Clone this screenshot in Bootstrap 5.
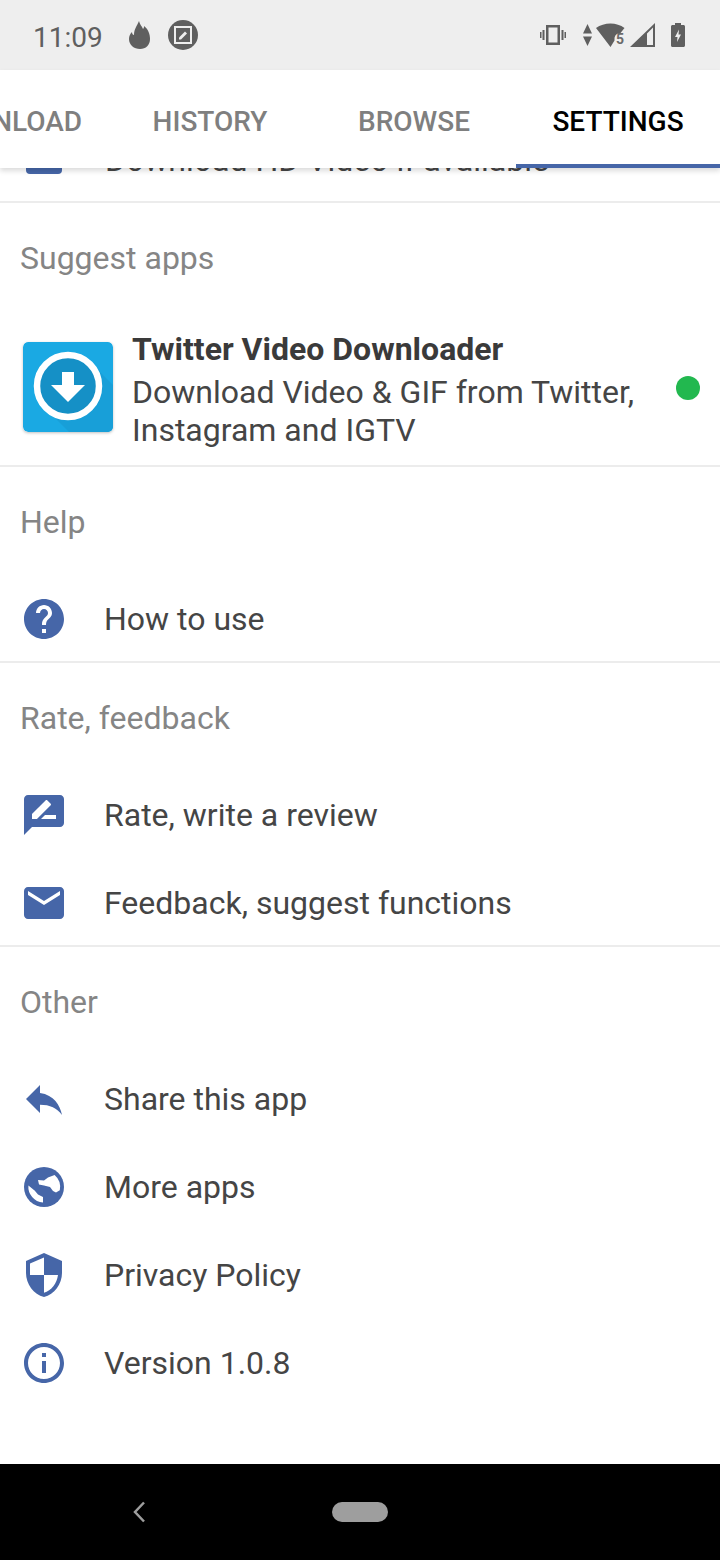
<!DOCTYPE html>
<html lang="en">

<head>
    <meta charset="UTF-8" />
    <meta name="viewport" content="width=device-width, initial-scale=1" />
    <title>Settings</title>
    <link href="https://cdn.jsdelivr.net/npm/bootstrap@5.3.2/dist/css/bootstrap.min.css" rel="stylesheet" />
    <style>
        body {
            background-color: white;
            font-family: Roboto, sans-serif;
            margin: 0;
            height: 1560px;
            overflow: hidden;
        }

        .status-bar {
            background-color: #eeeeee;
            height: 70px;
            padding: 0 33px;
            color: #5f5f5f;
            font-size: 28px;
        }

        .status-bar svg {
            fill: #5f5f5f;
            display: block;
        }

        .status-time {
            padding-top: 5px;
        }

        .status-flame {
            margin-left: 25px;
        }

        .status-icons {
            width: 148px;
            height: 30px;
        }

        .tab-bar {
            height: 98px;
            background-color: white;
            box-shadow: 0 3px 5px rgba(0, 0, 0, 0.14);
            position: relative;
            z-index: 2;
            overflow: hidden;
        }

        .tab-item {
            flex: 0 0 204px;
            height: 98px;
            padding-top: 6px;
            font-size: 28px;
            font-weight: 500;
            color: #7f7f7f;
            text-align: center;
        }

        .tab-item.active-tab {
            color: black;
            box-shadow: inset 0 -4px 0 #4666a8;
        }

        .content-area {
            height: 1296px;
            overflow: hidden;
            color: #454545;
        }

        .clipped-row {
            height: 63px;
            margin-top: -30px;
            padding: 0 0 19px 26px;
            gap: 43px;
            font-size: 32px;
        }

        .clipped-icon {
            width: 36px;
            height: 28px;
            background-color: #4666a8;
            border-radius: 4px;
        }

        .group-box {
            border-bottom: 2px solid #ececec;
        }

        .group-box:last-child {
            border-bottom: 0;
        }

        .group-title {
            height: 108px;
            padding: 35px 0 0 20px;
            font-size: 32px;
            line-height: 40px;
            color: #858585;
        }

        .option-row {
            height: 88px;
            gap: 36px;
            padding-left: 20px;
            font-size: 32px;
        }

        .option-row:last-child {
            margin-bottom: -2px;
        }

        .option-row svg {
            fill: #4666a8;
        }

        .app-row {
            height: 154px;
            padding: 31px 0 0 23px;
            position: relative;
        }

        .app-logo {
            border-radius: 5px;
            box-shadow: 0 1px 3px rgba(0, 0, 0, 0.25);
        }

        .app-text {
            padding-left: 19px;
            margin-top: -16px;
            font-size: 32px;
            line-height: 38px;
        }

        .app-text strong {
            display: block;
            font-weight: 700;
            line-height: 47px;
            color: #3a3a3a;
        }

        .green-dot {
            width: 24px;
            height: 24px;
            border-radius: 50%;
            background-color: #22b84f;
            position: absolute;
            right: 20px;
            top: 65px;
        }

        .bottom-nav {
            height: 96px;
            background-color: black;
            position: relative;
        }

        .back-arrow {
            position: absolute;
            left: 132px;
            top: 37px;
        }

        .home-pill {
            width: 56px;
            height: 20px;
            border-radius: 10px;
            background-color: #9e9e9e;
        }
    </style>
</head>

<body>

    <div class="status-bar d-flex align-items-center">
        <span class="status-time">11:09</span>
        <svg class="status-flame" width="24" height="30" viewBox="0 0 24 30"><path d="M11 1c1 4 3 5 4 8 1-1 1-2 1-3 4 3 6 8 6 13 0 6-4 10-10 10S1 25 1 19c0-3 1-5 3-7 0 2 1 3 2 3 0-6 3-9 5-14z" /></svg>
        <svg class="ms-3" width="30" height="30" viewBox="0 0 30 30"><circle cx="15" cy="15" r="15" /><path d="M7 7h16v16H7z" fill="none" stroke="#eee" stroke-width="2" /><path d="M11 17.500l6-6 2 2-6 6h-2z" fill="#eee" /></svg>
        <div class="status-icons ms-auto d-flex align-items-center">
            <svg width="28" height="20" viewBox="0 0 28 20"><path d="M7 0h14v20H7zM9.500 2.500v15h9v-15zM3.500 5h2v10h-2zM22.500 5h2v10h-2zM1 7h1.500v6H1zM25.500 7H27v6h-1.500z" fill-rule="evenodd" /></svg>
            <svg class="ms-3" width="9" height="22" viewBox="0 0 9 22"><path d="M4.500 0L9 9.500H0zM0 12.500h9L4.500 22z" /></svg>
            <svg class="ms-1" width="30" height="24" viewBox="0 0 30 24"><path d="M0 5C8-1 21-1 28.500 5l-4 5c-3 0-6 2-6 6v1.500L14.500 24z" /><text x="20" y="21" font-size="14" font-family="Roboto" font-weight="700" fill="#6a6a6a">5</text></svg>
            <svg class="ms-1" width="25" height="24" viewBox="0 0 25 24"><path d="M0 24L25 0v24zM17 22h6V4.500l-6 6z" fill-rule="evenodd" /></svg>
            <svg class="ms-3" width="14" height="24" viewBox="0 0 14 24"><path d="M4 0h6v2h2.500c.8 0 1.500.7 1.500 1.500v19c0 .8-.7 1.500-1.500 1.500h-11C.7 24 0 23.300 0 22.500v-19C0 2.700.7 2 1.500 2H4z" /><path d="M8 6.500l-4 7.500h2.500L6 19l4-7.500H7.500z" fill="#eee" /></svg>
        </div>
    </div>

    <div class="tab-bar d-flex justify-content-end align-items-center">
        <div class="tab-item d-flex align-items-center justify-content-center">DOWNLOAD</div>
        <div class="tab-item d-flex align-items-center justify-content-center">HISTORY</div>
        <div class="tab-item d-flex align-items-center justify-content-center">BROWSE</div>
        <div class="tab-item active-tab d-flex align-items-center justify-content-center">SETTINGS</div>
    </div>

    <div class="content-area">
        <div class="group-box">
            <div class="clipped-row d-flex align-items-center">
                <div class="clipped-icon"></div>
                <span>Download HD Video if available</span>
            </div>
        </div>

        <div class="group-box">
            <div class="group-title">Suggest apps</div>
            <div class="app-row d-flex">
                <svg class="app-logo flex-shrink-0" width="90" height="90" viewBox="0 0 90 90">
                    <rect width="90" height="90" rx="5" fill="#1aa9e3" />
                    <path d="M68 21L90 43V85c0 3-2 5-5 5H46L22 66z" fill="#189fd8" />
                    <circle cx="45" cy="44" r="31" fill="#1590c6" stroke="white" stroke-width="6.500" />
                    <path d="M39 30h12v13h11L45 60 28 43h11z" fill="white" />
                </svg>
                <div class="app-text">
                    <strong>Twitter Video Downloader</strong>
                    Download Video &amp; GIF from Twitter,<br />Instagram and IGTV
                </div>
                <div class="green-dot"></div>
            </div>
        </div>

        <div class="group-box">
            <div class="group-title">Help</div>
            <div class="option-row d-flex align-items-center">
                <svg width="48" height="48" viewBox="0 0 24 24"><path d="M12 2C6.480 2 2 6.480 2 12s4.480 10 10 10 10-4.480 10-10S17.520 2 12 2zm1 17h-2v-2h2v2zm2.070-7.750l-.9.920C13.450 12.900 13 13.500 13 15h-2v-.5c0-1.100.45-2.100 1.170-2.830l1.240-1.260c.37-.36.59-.86.59-1.410 0-1.100-.9-2-2-2s-2 .9-2 2H8c0-2.210 1.790-4 4-4s4 1.790 4 4c0 .88-.36 1.680-.93 2.250z" /></svg>
                <span>How to use</span>
            </div>
        </div>

        <div class="group-box">
            <div class="group-title">Rate, feedback</div>
            <div class="option-row d-flex align-items-center">
                <svg width="48" height="48" viewBox="0 0 24 24"><path d="M20 2H4c-1.100 0-1.990.9-1.990 2L2 22l4-4h14c1.100 0 2-.9 2-2V4c0-1.100-.9-2-2-2zM6 14v-2.470l6.880-6.880c.2-.2.51-.2.71 0l1.770 1.770c.2.2.2.51 0 .71L8.470 14H6zm12 0h-7.500l2-2H18v2z" /></svg>
                <span>Rate, write a review</span>
            </div>
            <div class="option-row d-flex align-items-center">
                <svg width="48" height="48" viewBox="0 0 24 24"><path d="M20 4H4c-1.100 0-1.990.9-1.990 2L2 18c0 1.100.9 2 2 2h16c1.100 0 2-.9 2-2V6c0-1.100-.9-2-2-2zm0 4l-8 5-8-5V6l8 5 8-5v2z" /></svg>
                <span>Feedback, suggest functions</span>
            </div>
        </div>

        <div class="group-box">
            <div class="group-title">Other</div>
            <div class="option-row d-flex align-items-center">
                <svg width="48" height="48" viewBox="0 0 24 24"><path d="M10 9V5l-7 7 7 7v-4.100c5 0 8.500 1.600 11 5.100-1-5-4-10-11-11z" /></svg>
                <span>Share this app</span>
            </div>
            <div class="option-row d-flex align-items-center">
                <svg width="48" height="48" viewBox="0 0 24 24"><circle cx="12" cy="12" r="10" /><path d="M4.200 11.200L7.300 13.700 9 15.800 11.500 17V19.800A8 8 0 0 1 4.200 11.200zM9 8.500L12 8.800 14 7.200 17.300 6A8 8 0 0 1 19.900 13.600L18 14.800 16.500 14 15 12 12 11.300 9.500 10.800z" fill="white" /></svg>
                <span>More apps</span>
            </div>
            <div class="option-row d-flex align-items-center">
                <svg width="48" height="48" viewBox="0 0 24 24"><path d="M12 1L3 5v6c0 5.550 3.840 10.740 9 12 5.160-1.260 9-6.450 9-12V5l-9-4zm0 10.990h7c-.53 4.120-3.280 7.790-7 8.940V12H5V6.300l7-3.110v8.800z" /></svg>
                <span>Privacy Policy</span>
            </div>
            <div class="option-row d-flex align-items-center">
                <svg width="48" height="48" viewBox="0 0 24 24"><path d="M11 7h2v2h-2zm0 4h2v6h-2zm1-9C6.480 2 2 6.480 2 12s4.480 10 10 10 10-4.480 10-10S17.520 2 12 2zm0 18c-4.410 0-8-3.590-8-8s3.590-8 8-8 8 3.590 8 8-3.590 8-8 8z" /></svg>
                <span>Version 1.0.8</span>
            </div>
        </div>
    </div>

    <div class="bottom-nav d-flex align-items-center justify-content-center">
        <svg class="back-arrow" width="14" height="22" viewBox="0 0 14 22"><path d="M12 1.500L3 11l9 9.500" fill="none" stroke="#9e9e9e" stroke-width="2.500" /></svg>
        <div class="home-pill"></div>
    </div>

</body>

</html>
